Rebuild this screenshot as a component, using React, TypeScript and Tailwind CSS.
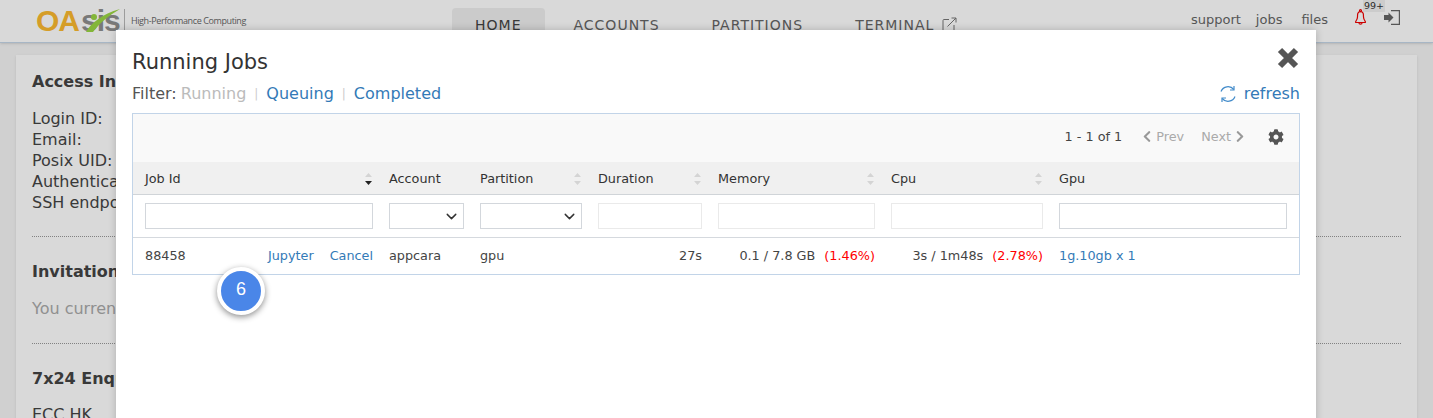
import React from 'react';
import { ChevronDown } from 'lucide-react';
import { FaChevronLeft, FaChevronRight, FaCog } from 'react-icons/fa';

const SortIcon: React.FC<{ active?: boolean }> = ({ active }) => (
  <svg width="9" height="14" viewBox="0 0 9 14" className="shrink-0">
    <path d="M4.5 1 L8 5 L1 5 Z" fill="#d4d4d4" />
    <path d="M4.5 13 L8 9 L1 9 Z" fill={active ? '#222222' : '#d4d4d4'} />
  </svg>
);

const HeaderCell: React.FC<{ label: string; sort?: boolean; active?: boolean }> = ({ label, sort, active }) => (
  <div className="flex items-center justify-between">
    <span>{label}</span>
    {sort && <SortIcon active={active} />}
  </div>
);

const FilterInput: React.FC<{ dark?: boolean }> = ({ dark }) => (
  <div className={`h-[26px] border bg-white ${dark ? 'border-[#d3d7dc]' : 'border-[#eaeaea]'}`} />
);

const FilterSelect = () => (
  <div className="flex h-[26px] items-center justify-end border border-[#d3d7dc] bg-white pr-[3px]">
    <ChevronDown size={17} strokeWidth={2} className="text-[#333]" />
  </div>
);

const Logo = () => (
  <div className="flex items-center">
    <div className="relative flex h-[32px] w-[83px] items-center font-['Liberation_Sans',sans-serif] text-[30px] font-bold leading-none tracking-[-1px]">
      <span className="text-[#fbb92f]">OA</span>
      <span className="ml-[2px] text-[#8f8f8f]">sis</span>
      <svg width="50" height="28" viewBox="0 0 50 28" className="absolute left-[44px] top-[1px]">
        <path d="M6 26 C 10 18, 22 8, 40 3 C 28 10, 20 17, 13 26 Z" fill="#9bd644" />
        <circle cx="14" cy="11" r="3" fill="#9bd644" />
      </svg>
    </div>
    <div className="ml-[5px] h-[25px] w-px bg-[#b8b8b8]" />
    <span className="ml-[6px] font-['Open_Sans',sans-serif] text-[9px] tracking-[-0.4px] text-[#666]">High-Performance Computing</span>
  </div>
);

const Header = () => (
  <header className="relative flex h-[43px] items-start border-b border-[#c5d6e8] bg-white pl-[36px] pr-[33px] shadow-sm">
    <div className="mt-[5px] w-[416px]">
      <Logo />
    </div>
    <nav className="mt-[8px] flex items-center text-[14px] tracking-[1px] text-[#666]">
      <a className="rounded-t bg-[#efefef] pb-[6px] pl-[23px] pr-[24px] pt-[7px] text-[#444]">HOME</a>
      <a className="ml-[28px] pt-[1px]">ACCOUNTS</a>
      <a className="ml-[52px] pt-[1px]">PARTITIONS</a>
      <a className="ml-[52px] flex items-center gap-[8px] pt-[1px]">
        TERMINAL
        <svg width="15" height="15" viewBox="0 0 15 15" fill="none" stroke="#777" strokeWidth="1" className="-mt-[3px]">
          <path d="M7 2.5 H2 a1 1 0 0 0 -1 1 V13 a1 1 0 0 0 1 1 H11 a1 1 0 0 0 1 -1 V8" />
          <path d="M5.5 9.5 L14 1 M9.5 1 H14 V5.5" />
        </svg>
      </a>
    </nav>
    <div className="ml-auto mt-[10px] flex items-center text-[13px] text-[#666]">
      <a>support</a>
      <a className="ml-[15px]">jobs</a>
      <a className="ml-[19px]">files</a>
      <div className="relative -mt-[5px] ml-[25px] h-[16px] w-[16px] pl-[2px]">
        <svg width="11" height="16" viewBox="0 0 11 16" fill="none" stroke="#f00000" strokeWidth="1.2">
          <circle cx="5.5" cy="1.6" r="1" />
          <path d="M5.5 2.6 C2.5 2.6 2.5 5 2.5 8 C2.5 10 1.5 11.5 0.7 12.5 V13.5 H10.3 V12.5 C9.5 11.5 8.5 10 8.5 8 C8.5 5 8.5 2.6 5.5 2.6 Z" />
          <path d="M4 14 C4 15.6 7 15.6 7 14" />
        </svg>
        <span className="absolute -top-[9px] left-[10px] bg-[#f0f0f0] px-[1px] text-[9.5px] leading-[12px] text-[#333]">99+</span>
      </div>
      <svg width="16" height="15" viewBox="0 0 16 15" className="-mt-[5px] ml-[15px]">
        <path d="M0 5 H4.5 V2.5 L9.5 7.5 L4.5 12.5 V10 H0 Z" fill="#666" />
        <path d="M7 0.6 H15.4 V14.4 H7" fill="none" stroke="#666" strokeWidth="1.2" />
      </svg>
    </div>
  </header>
);

const InfoPanel = () => (
  <section className="mx-4 mt-3 bg-white px-4 pt-[16px] text-[16px] leading-[21px] text-[#444] shadow">
    <h3 className="font-bold">Access Information</h3>
    <div className="mt-[16px]">
      <p>Login ID:</p>
      <p>Email:</p>
      <p>Posix UID:</p>
      <p>Authentication:</p>
      <p>SSH endpoint:</p>
    </div>
    <hr className="mt-[23px] border-t border-dotted border-[#999]" />
    <h3 className="mt-[24px] font-bold">Invitations</h3>
    <p className="mt-[16px] text-[#aaa]">You currently have no invitations.</p>
    <hr className="mt-[24px] border-t border-dotted border-[#999]" />
    <h3 className="mt-[24px] font-bold">7x24 Enquiry</h3>
    <p className="mt-[15px]">ECC HK</p>
  </section>
);

const rowClass = 'grid grid-cols-[228px_75px_102px_104px_157px_152px_228px] gap-x-4 px-3';

const JobsTable = () => (
  <div className="mt-[8px] border border-[#c2d4e8] text-[12.8px] text-[#444]">
    <div className="flex h-[48px] items-center justify-end bg-[#f9f9f9] pb-[3px] pr-[15px]">
      <span className="text-[#444]">1 - 1 of 1</span>
      <span className="ml-[21px] flex items-center gap-[5px] text-[#aaa]">
        <FaChevronLeft size={13} className="w-[8px] text-[#999]" /> Prev
      </span>
      <span className="ml-[17px] flex items-center gap-[5px] text-[#aaa]">
        Next <FaChevronRight size={13} className="w-[8px] text-[#999]" />
      </span>
      <FaCog size={16} className="ml-[24px] text-[#555]" />
    </div>
    <div className={`${rowClass} h-[33px] items-center border-b border-[#d0d4d8] bg-[#f0f0f0] pt-[1px] text-[#333]`}>
      <HeaderCell label="Job Id" sort active />
      <HeaderCell label="Account" />
      <HeaderCell label="Partition" sort />
      <HeaderCell label="Duration" sort />
      <HeaderCell label="Memory" sort />
      <HeaderCell label="Cpu" sort />
      <HeaderCell label="Gpu" />
    </div>
    <div className={`${rowClass} h-[43px] items-center border-b border-[#d5d9de]`}>
      <FilterInput dark />
      <FilterSelect />
      <FilterSelect />
      <FilterInput />
      <FilterInput />
      <FilterInput />
      <FilterInput dark />
    </div>
    <div className={`${rowClass} relative h-[36px] items-center`}>
      <div className="flex items-center">
        <span>88458</span>
        <a className="ml-auto text-[#337ab7]">Jupyter</a>
        <a className="ml-[16px] text-[#337ab7]">Cancel</a>
      </div>
      <span>appcara</span>
      <span>gpu</span>
      <span className="text-right">27s</span>
      <span className="whitespace-nowrap text-right">
        0.1 / 7.8 GB <span className="ml-[5px] text-[#ff0000]">(1.46%)</span>
      </span>
      <span className="whitespace-nowrap text-right">
        3s / 1m48s <span className="ml-[5px] text-[#ff0000]">(2.78%)</span>
      </span>
      <a className="text-[#337ab7]">1g.10gb x 1</a>
    </div>
  </div>
);

const StepBadge = () => (
  <div className="absolute left-[101px] top-[237px] flex h-[48px] w-[48px] items-center justify-center rounded-full border-4 border-white bg-[#4a86e8] pb-[3px] font-['Liberation_Sans',sans-serif] text-[18px] text-white shadow-[0_2px_6px_rgba(0,0,0,0.45)]">
    6
  </div>
);

const JobsModal = () => (
  <div className="relative h-[400px] w-[1200px] bg-white px-4 pt-[17px] shadow-[0_0_8px_rgba(0,0,0,0.2)]">
    <div className="flex h-[30px] items-center justify-between">
      <h2 className="text-[21px] leading-[30px] text-[#333]">Running Jobs</h2>
      <svg width="22" height="22" viewBox="0 0 22 22" className="-mt-[8px] mr-[1px]">
        <path d="M3 3 L19 19 M19 3 L3 19" stroke="#555" strokeWidth="6" />
      </svg>
    </div>
    <div className="mt-[6px] flex items-center text-[16px] leading-[22px] text-[#555]">
      <span>Filter:</span>
      <span className="ml-[4px] text-[#bbb]">Running</span>
      <span className="mx-[8px] text-[12px] text-[#ccc]">|</span>
      <a className="text-[#337ab7]">Queuing</a>
      <span className="mx-[8px] text-[12px] text-[#ccc]">|</span>
      <a className="text-[#337ab7]">Completed</a>
      <a className="ml-auto flex items-center gap-[7px] text-[#337ab7]">
        <svg width="18" height="18" viewBox="0 0 18 18" fill="none" stroke="#428bca" strokeWidth="1.2">
          <path d="M2 6.5 A7.5 7.5 0 0 1 14.8 4.5" />
          <path d="M15 1 V5 H11" />
          <path d="M16 11.5 A7.5 7.5 0 0 1 3.2 13.5" />
          <path d="M3 17 V13 H7" />
        </svg>
        refresh
      </a>
    </div>
    <JobsTable />
    <StepBadge />
  </div>
);

export default function App() {
  return (
    <div className="relative h-screen overflow-hidden bg-[#f5f5f5] font-['DejaVu_Sans',sans-serif]">
      <Header />
      <InfoPanel />
      <div className="absolute inset-0 flex justify-start bg-black/15 pl-[116px] pt-[30px]">
        <JobsModal />
      </div>
    </div>
  );
}
